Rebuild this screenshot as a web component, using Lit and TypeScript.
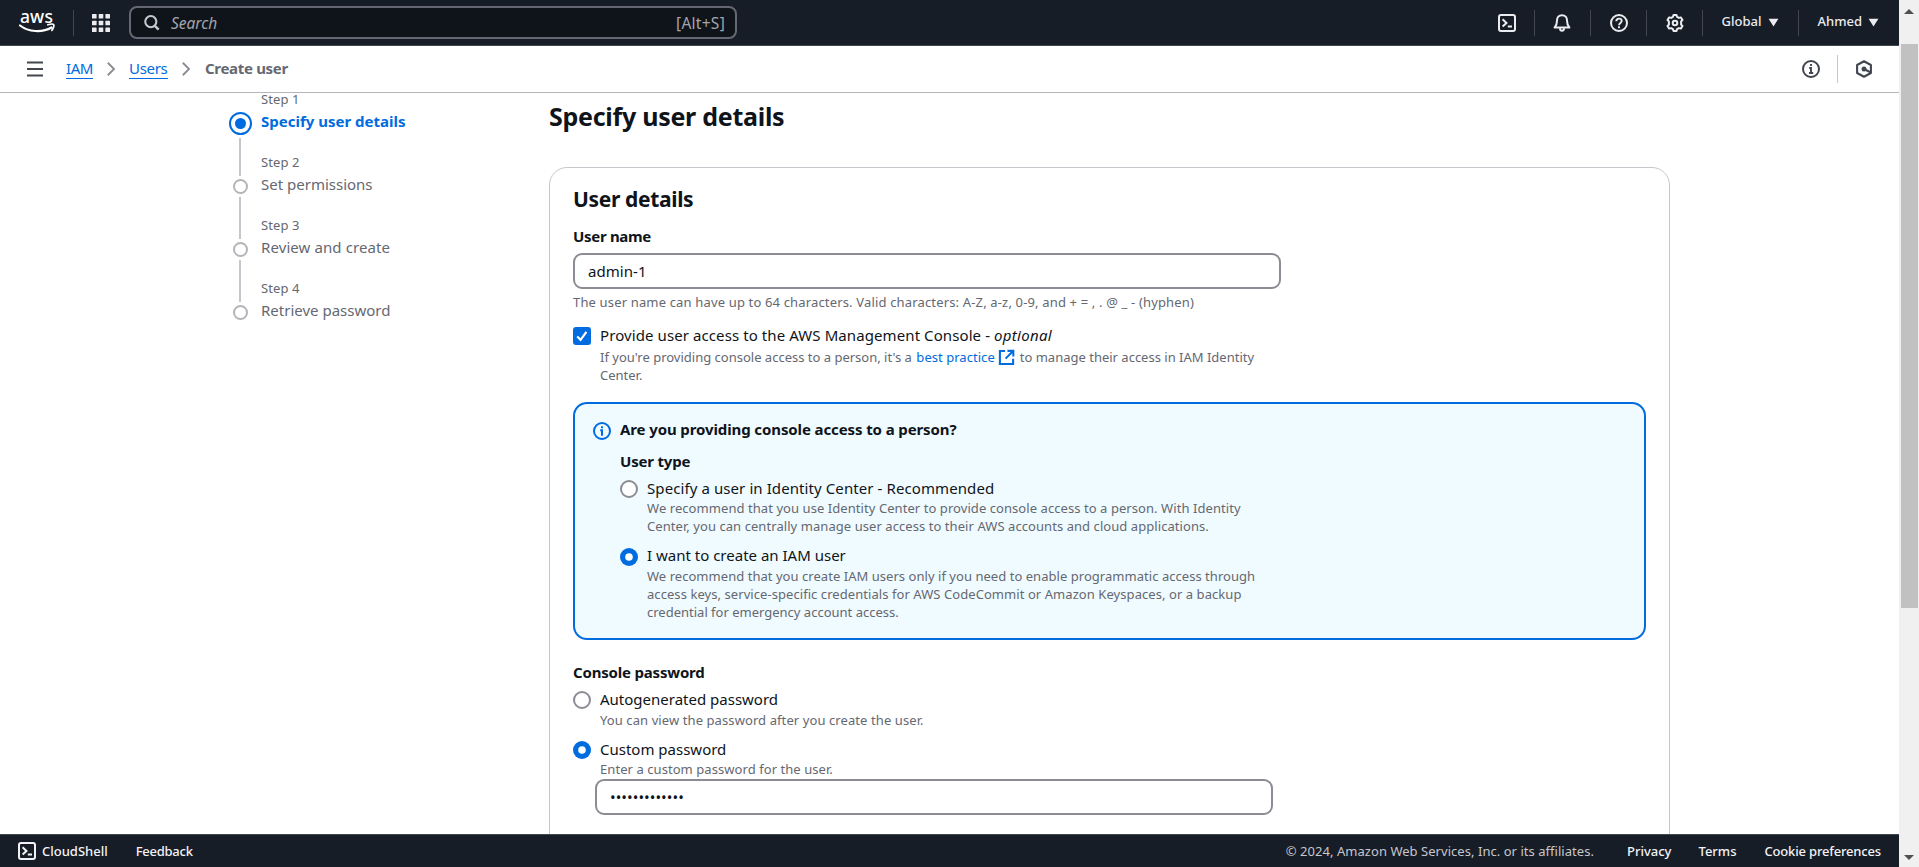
import { LitElement, html, css, svg } from "lit";
import { customElement, property } from "lit/decorators.js";

const shapes: Record<string, unknown> = {
  grid: svg`<g fill="currentColor" stroke="none">${[0, 6.7, 13.4].map((y) => [0, 6.7, 13.4].map((x) => svg`<rect x=${x} y=${y} width="4.6" height="4.6" rx=".6"></rect>`))}</g>`,
  search: svg`<circle cx="7.2" cy="7" r="5.9" stroke-width="2.2"></circle><path d="m11.3 11.2 4.2 4.3" stroke-width="2.6"></path>`,
  shell: svg`<rect x="1" y="1" width="16" height="16" rx="2" stroke-width="2"></rect><path d="m4.6 5.2 3.9 3.7-3.9 3.7M9.8 12.6h4.2" stroke-width="2"></path>`,
  bell: svg`<path d="M9 1.2c-3.2 0-5 2.3-5 5.2 0 3-.6 5.2-2.4 7.1h14.8C14.6 11.6 14 9.4 14 6.4 14 3.5 12.2 1.2 9 1.2ZM6.9 14.6c.2 1.5 1 2.200 2.100 2.200s1.900-.7 2.100-2.200" stroke-width="2" stroke-linejoin="round"></path>`,
  help: svg`<circle cx="9" cy="9" r="8" stroke-width="2"></circle><path d="M6.300 7.200c0-1.600 1.100-2.600 2.700-2.600s2.700 1 2.700 2.400c0 1.900-2.700 2-2.700 4.200M9 12.300v2" stroke-width="1.900"></path>`,
  gear: svg`<path d="M7 2.800 7.500 1h3l.5 1.800 1.900 1.100 1.900-.5L16.500 6l-1.400 1.400v3.200l1.400 1.400-1.700 2.600-1.900-.5-1.900 1.100-.5 1.800h-3L7 15.200l-1.900-1.100-1.900.5L1.500 12l1.400-1.400V7.400L1.500 6l1.700-2.600 1.900.5Z" stroke-width="2" stroke-linejoin="round"></path><circle cx="9" cy="9" r="2.300" stroke-width="2"></circle>`,
  menu: svg`<path d="M1 2.500h16M1 9h16M1 15.500h16" stroke-width="2.100"></path>`,
  info: svg`<circle cx="9" cy="9" r="8" stroke-width="2"></circle><path d="M9 4v2M7.200 8H9v4.200M7 13h4.200" stroke-width="1.900"></path>`,
  infoBold: svg`<circle cx="9" cy="9" r="8" stroke-width="2"></circle><path d="M9 4.200v2M7.200 8.300H9V13.800" stroke-width="2"></path>`,
  hex: svg`<path d="M9 1.300 15.900 5v8L9 16.700 2.100 13V5Z" stroke-width="2.100" stroke-linejoin="round"></path><path d="m9 9 6.500 3.400" stroke-width="2.200"></path><circle cx="9" cy="9" r="2.500" fill="currentColor" stroke="none"></circle>`,
  chevron: svg`<path d="m5.400 2 7 7-7 7" stroke-width="2.100"></path>`,
  external: svg`<path d="M7.500 2.200H2v13.600h14v-5.500M10 2h6.200v6M16 2.200 8 10.200" stroke-width="2.200"></path>`,
  check: svg`<rect width="18" height="18" rx="3" fill="#006ce0" stroke="none"></rect><path d="m4.200 9.500 3.400 3.300 5.800-8" stroke="#fff" stroke-width="2.200"></path>`,
  radioOn: svg`<circle cx="9" cy="9" r="9" fill="#006ce0" stroke="none"></circle><circle cx="9" cy="9" r="3.800" fill="#fff" stroke="none"></circle>`,
  radioOff: svg`<circle cx="9" cy="9" r="8" fill="#fff" stroke="#8c8c94" stroke-width="2"></circle>`,
  caret: svg`<path d="M1 3h16L9 15.500Z" fill="currentColor" stroke="none"></path>`,
};

@customElement("ui-icon")
export class UiIcon extends LitElement {
  @property() name = "";
  static styles = css`
    :host { display: block; width: 18px; height: 18px; flex: none; }
    svg { display: block; width: 100%; height: 100%; overflow: visible; }
  `;
  render() {
    return html`<svg viewBox="0 0 18 18" fill="none" stroke="currentColor">${shapes[this.name]}</svg>`;
  }
}

@customElement("app-root")
export class AppRoot extends LitElement {
  static styles = css`
    :host { display: block; height: 867px; overflow: hidden; font: 15px/22px "Noto Sans", sans-serif; color: #0f141a; background: #fff; }
    * { box-sizing: border-box; }
    h1, h2, p { margin: 0; }
    .window { display: flex; height: 867px; }
    .page { width: 1899px; display: flex; flex-direction: column; }
    .k16 { letter-spacing: 0.157px; }
    .k9 { letter-spacing: 0.09px; }
    .k6 { letter-spacing: 0.065px; }
    .k4 { letter-spacing: 0.04px; }
    .k-1 { letter-spacing: -0.11px; }
    .k-2 { letter-spacing: -0.19px; }
    .k-3 { letter-spacing: -0.31px; }

    .topbar { height: 46px; flex: none; display: flex; align-items: center; background: #161d26; border-bottom: 1px solid #424650; color: #ebebf0; padding-left: 18px; }
    .logo { width: 37px; height: 26px; display: flex; flex-direction: column; align-items: center; color: #fff; }
    .logo span { font: 500 17.5px/13px "Noto Sans", sans-serif; letter-spacing: 0.2px; height: 14px; }
    .logo svg { width: 36px; height: 10px; display: block; overflow: visible; }
    .sep { width: 1px; height: 26px; background: #424650; flex: none; }
    .logo + .sep { margin: 0 18px; }
    .search { margin-left: 19px; width: 608px; height: 33px; border: 2px solid #656871; border-radius: 8px; background: #0f141a; display: flex; align-items: center; padding: 0 10px 0 13px; font-size: 15.5px; color: #a4a4ad; }
    .search ui-icon { width: 17px; height: 17px; margin-top: 1px; color: #c6c6cd; }
    .search em { margin-left: 10px; flex: 1; }
    .search .keys { letter-spacing: 0.27px; }
    .tools { margin-left: auto; display: flex; align-items: center; font: 500 13px/18px "Noto Sans", sans-serif; padding-right: 20px; }
    .tools .name { margin-top: -3px; }
    .tools .caret { width: 11px; height: 11px; }
    .s1 { margin: 0 18px; }
    .s2 { margin: 0 19px; }
    .s3 { margin: 0 19px 0 18px; }
    .s4 { margin: 0 19px 0 18px; }
    .global, .ahmed { margin-right: 6px; }

    .crumbs { height: 47px; flex: none; display: flex; align-items: center; border-bottom: 1px solid #b4b4bb; padding: 0 26px; color: #424650; }
    .crumbs .link { color: #006ce0; border-bottom: 1px solid #006ce0; line-height: 18px; height: 20px; }
    .crumbs .iam { margin-left: 22px; letter-spacing: -0.42px; width: 27px; }
    .crumbs .chev { color: #8c8c94; width: 16px; height: 16px; margin: 0 10px; }
    .crumbs .users { width: 39px; }
    .crumbs strong { color: #656871; margin: -2px 0 0 1px; }
    .crumbs .first { margin-left: auto; }
    .crumbs .bar { width: 1px; height: 28px; background: #c6c6cd; margin: 0 17px; }

    .scroll { flex: 1; min-height: 0; overflow: hidden; display: flex; align-items: flex-start; }
    .steps { margin-left: 228px; width: 321px; display: flex; flex-direction: column; color: #656871; }
    .step { display: flex; height: 63px; gap: 9px; }
    .rail { width: 24px; display: flex; flex-direction: column; align-items: center; padding-top: 26px; }
    .dot { width: 15px; height: 15px; border: 2px solid #b4b4bb; border-radius: 50%; flex: none; }
    .line { width: 2px; flex: 1; background: #c6c6cd; margin: 3px 0 -23px; }
    .step:last-child .line { display: none; }
    .num { font-size: 13px; line-height: 18px; letter-spacing: 0.09px; margin-bottom: 2px; }
    .current { height: 60px; }
    .current .num { line-height: 12px; margin-bottom: 5px; }
    .current .rail { padding-top: 19px; }
    .current .dot { width: 23px; height: 23px; display: grid; place-items: center; border-color: #006ce0; }
    .current .dot::after { content: ""; width: 11px; height: 11px; border-radius: 50%; background: #006ce0; }
    .current .title { color: #006ce0; font-weight: 700; }

    .main { width: 1121px; padding-top: 7px; }
    h1 { font-size: 25px; line-height: 32px; letter-spacing: -0.27px; margin-bottom: 35px; }
    .card { height: 900px; border: 1px solid #c6c6cd; border-radius: 18px; padding: 18px 23px 0; }
    h2 { font-size: 21px; line-height: 26px; letter-spacing: -0.34px; margin-bottom: 13px; }
    .label { font-weight: 700; }
    .input { height: 36px; border: 2px solid #8c8c94; border-radius: 9px; background: #fff; padding: 5px 13px; }
    .username { width: 708px; margin: 6px 0 4px; }
    .hint { font-size: 13px; line-height: 18px; color: #656871; white-space: nowrap; }
    .choice { display: flex; gap: 9px; }
    .choice .icon { margin-top: 3px; }
    .choice em { letter-spacing: 0.3px; }
    .access { margin-top: 13px; }
    .access .hint { margin-top: 2px; display: flex; flex-direction: column; }
    .mixed { display: flex; align-items: center; height: 18px; }
    .mixed a { color: #006ce0; margin-left: 4.5px; }
    .mixed ui-icon { width: 17px; height: 17px; color: #006ce0; margin: 0 5px 0 3px; }
    .alert { margin-top: 18px; height: 238px; border: 2px solid #006ce0; border-radius: 14px; background: #f0fbff; padding: 14px 18px; display: flex; gap: 9px; }
    .alert > ui-icon { color: #006ce0; margin-top: 4px; }
    .alert .type { margin-top: 10px; }
    .alert .choice { margin-top: 5px; }
    .alert .choice + .choice { margin-top: 9px; }
    .alert .choice + .choice .hint { margin-top: 1px; }
    .alert .choice + .choice .icon { margin-top: 4px; }
    .console { margin-top: 21px; }
    .auto { margin-top: 5px; }
    .auto .hint { margin-top: 1px; }
    .custom { margin-top: 9px; }
    .password { margin: 1px 0 0 22px; width: 678px; }

    .footer { height: 33px; flex: none; background: #161d26; border-top: 1px solid #424650; display: flex; align-items: center; padding: 0 18px; font: 500 13px/18px "Noto Sans", sans-serif; color: #f3f3f7; }
    .footer .shell { margin-left: 6px; }
    .footer .feedback { margin-left: 28px; letter-spacing: -0.25px; }
    .footer .copy { margin-left: auto; font-weight: 400; color: #c6c6cd; }
    .footer .privacy { margin-left: 33px; }
    .footer .terms { margin-left: 27px; }
    .footer .cookie { margin-left: 28px; letter-spacing: -0.174px; }

    .scrollbar { width: 20px; background: #f0f0f0; display: flex; flex-direction: column; align-items: center; padding: 9px 0 7px; }
    .scrollbar svg { width: 10px; height: 5px; display: block; flex: none; }
    .thumb { width: 17px; height: 564px; margin: 30px 0 auto 1px; background: #c1c1c1; flex: none; }
  `;

  private step(n: number, title: string, track = "") {
    return html`<div class="step ${n === 1 ? "current" : ""}">
      <div class="rail"><div class="dot"></div><div class="line"></div></div>
      <div><div class="num">Step ${n}</div><div class="title ${track}">${title}</div></div>
    </div>`;
  }

  render() {
    return html`<div class="window">
      <div class="page">
        <header class="topbar">
          <div class="logo"><span>aws</span>
            <svg viewBox="0 0 36 10" fill="none" stroke="#fff"><path d="M1 1.500C9.500 8 23 9 32.500 3.500" stroke-width="2.200" stroke-linecap="round"></path><path d="M28.800.8c2.500-.7 5.600-.7 6 0 .4.900-.4 4-2 5.600" stroke-width="1.700" stroke-linecap="round"></path></svg>
          </div>
          <div class="sep"></div>
          <ui-icon name="grid"></ui-icon>
          <div class="search"><ui-icon name="search"></ui-icon><em>Search</em><span class="keys">[Alt+S]</span></div>
          <div class="tools">
            <ui-icon name="shell"></ui-icon><div class="sep s1"></div>
            <ui-icon name="bell"></ui-icon><div class="sep s2"></div>
            <ui-icon name="help"></ui-icon><div class="sep s4"></div>
            <ui-icon name="gear"></ui-icon><div class="sep s3"></div>
            <span class="name global">Global</span><ui-icon class="caret" name="caret"></ui-icon><div class="sep s2"></div>
            <span class="name ahmed">Ahmed</span><ui-icon class="caret" name="caret"></ui-icon>
          </div>
        </header>
        <nav class="crumbs">
          <ui-icon name="menu"></ui-icon>
          <span class="link iam">IAM</span><ui-icon class="chev" name="chevron"></ui-icon>
          <span class="link users k-3">Users</span><ui-icon class="chev" name="chevron"></ui-icon>
          <strong class="k-3">Create user</strong>
          <ui-icon class="first" name="info"></ui-icon><div class="bar"></div><ui-icon name="hex"></ui-icon>
        </nav>
        <div class="scroll">
          <aside class="steps">
            ${this.step(1, "Specify user details")}${this.step(2, "Set permissions")}
            ${this.step(3, "Review and create", "k9")}${this.step(4, "Retrieve password")}
          </aside>
          <main class="main">
            <h1>Specify user details</h1>
            <section class="card">
              <h2>User details</h2>
              <div class="label k-3">User name</div>
              <div class="input username k4">admin-1</div>
              <p class="hint k16">The user name can have up to 64 characters. Valid characters: A-Z, a-z, 0-9, and + = , . @ _ - (hyphen)</p>
              <div class="choice access">
                <ui-icon class="icon" name="check"></ui-icon>
                <div>
                  <div class="k9">Provide user access to the AWS Management Console - <em>optional</em></div>
                  <div class="hint">
                    <div class="mixed"><span>If you're providing console access to a person, it's a</span><a class="k4">best practice</a><ui-icon name="external"></ui-icon><span>to manage their access in IAM Identity</span></div>
                    <div>Center.</div>
                  </div>
                </div>
              </div>
              <div class="alert">
                <ui-icon name="infoBold"></ui-icon>
                <div>
                  <div class="label k-1">Are you providing console access to a person?</div>
                  <div class="label type k-2">User type</div>
                  <div class="choice"><ui-icon class="icon" name="radioOff"></ui-icon>
                    <div><div class="k9">Specify a user in Identity Center - Recommended</div>
                      <p class="hint k6">We recommend that you use Identity Center to provide console access to a person. With Identity<br />Center, you can centrally manage user access to their AWS accounts and cloud applications.</p></div>
                  </div>
                  <div class="choice"><ui-icon class="icon" name="radioOn"></ui-icon>
                    <div><div>I want to create an IAM user</div>
                      <p class="hint"><span class="k4">We recommend that you create IAM users only if you need to enable programmatic access through</span><br /><span class="k6">access keys, service-specific credentials for AWS CodeCommit or Amazon Keyspaces, or a backup</span><br />credential for emergency account access.</p></div>
                  </div>
                </div>
              </div>
              <div class="label console k-2">Console password</div>
              <div class="choice auto"><ui-icon class="icon" name="radioOff"></ui-icon>
                <div><div>Autogenerated password</div><p class="hint k9">You can view the password after you create the user.</p></div>
              </div>
              <div class="choice custom"><ui-icon class="icon" name="radioOn"></ui-icon>
                <div><div>Custom password</div><p class="hint k6">Enter a custom password for the user.</p></div>
              </div>
              <div class="input password k4">•••••••••••••</div>
            </section>
          </main>
        </div>
        <footer class="footer">
          <ui-icon name="shell"></ui-icon><span class="shell">CloudShell</span><span class="feedback">Feedback</span>
          <span class="copy k4">© 2024, Amazon Web Services, Inc. or its affiliates.</span>
          <span class="privacy">Privacy</span><span class="terms">Terms</span><span class="cookie">Cookie preferences</span>
        </footer>
      </div>
      <div class="scrollbar">
        <svg viewBox="0 0 10 5"><path d="M0 5 5 0l5 5Z" fill="#505050"></path></svg>
        <div class="thumb"></div>
        <svg viewBox="0 0 10 5"><path d="m0 0 5 5 5-5Z" fill="#505050"></path></svg>
      </div>
    </div>`;
  }
}
